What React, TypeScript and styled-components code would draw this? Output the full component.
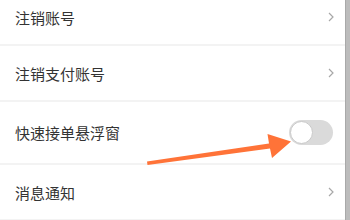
import React from 'react';
import styled, {createGlobalStyle} from "styled-components";

const GlobalStyle = createGlobalStyle`
  html, body {
    margin: 0;
    padding: 0;
    background: #ffffff;
    overflow: hidden;
  }
`

type Item = {label: string, kind: "link" | "switch"}

const items: Item[] = [
    {label: "注销账号", kind: "link"},
    {label: "注销支付账号", kind: "link"},
    {label: "快速接单悬浮窗", kind: "switch"},
    {label: "消息通知", kind: "link"},
]

const Page = styled.div`
  position: relative;
  width: 350px;
  height: 220px;
  display: flex;
  overflow: hidden;
  background: #ffffff;
  font-family: "Noto Sans CJK SC", "Noto Sans", sans-serif;
`
const List = styled.div`
  flex: 1;
  display: flex;
  flex-direction: column;
  margin-top: -10px;
`
const Row = styled.div<{ $tall?: boolean }>`
  height: ${p => p.$tall ? 61 : 54}px;
  flex-shrink: 0;
  display: flex;
  align-items: center;
  justify-content: space-between;
  padding: 0 11px 0 15px;
  border-bottom: 2px solid #f3f3f3;
`
const Label = styled.span`
  font-size: 15px;
  color: #333333;
  letter-spacing: 0;
`
const Chevron = styled.svg`
  width: 6px;
  height: 10px;
  margin-right: 0;
`
const Track = styled.div`
  width: 44px;
  height: 25px;
  border-radius: 13px;
  background: #dadada;
  display: flex;
  align-items: center;
  padding: 0 1px;
  margin-right: 1px;
  box-sizing: border-box;
`
const Knob = styled.div`
  width: 23px;
  height: 23px;
  border-radius: 50%;
  background: #ffffff;
  box-sizing: border-box;
  border: 1.5px solid #c9c9c9;
`
const Scrollbar = styled.div`
  width: 4px;
  background: #bcbcbc;
  border-left: 1px solid #a9a9a9;
`
const Arrow = styled.svg`
  position: absolute;
  left: 0;
  top: 0;
  width: 350px;
  height: 220px;
  pointer-events: none;
`

export default function App() {
    return (
        <Page>
            <GlobalStyle/>
            <List>
                {items.map((el, index) => (
                    <Row key={index} $tall={el.kind === "switch"}>
                        <Label>{el.label}</Label>
                        {el.kind === "switch" ? (
                            <Track><Knob/></Track>
                        ) : (
                            <Chevron viewBox="0 0 6 10">
                                <path d="M1 1 L5 5 L1 9" fill="none" stroke="#a8a8a8" strokeWidth="1.2"/>
                            </Chevron>
                        )}
                    </Row>
                ))}
            </List>
            <Scrollbar/>
            <Arrow viewBox="0 0 350 220">
                <polygon
                    points="147,161.5 269,143.5 267.5,134 291,141.5 272,158 270,148.5 147.5,165"
                    fill="#ff7338"
                />
            </Arrow>
        </Page>
    );
}
